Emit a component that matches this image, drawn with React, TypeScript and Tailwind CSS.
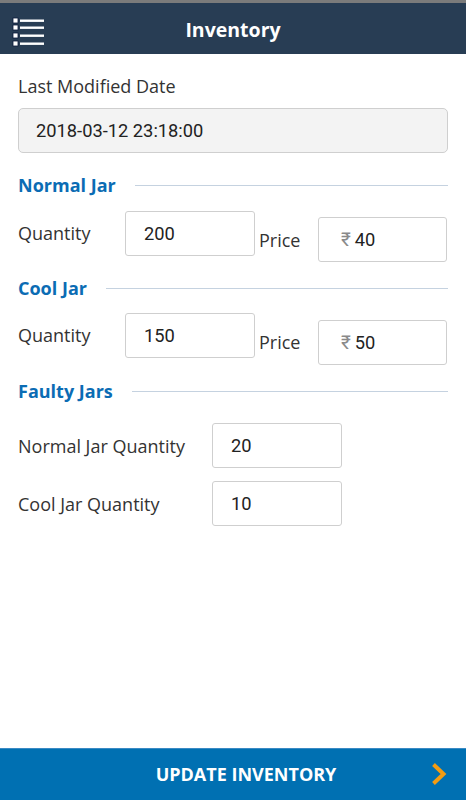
export default function App() {
  const font = { fontFamily: '"Open Sans", "Noto Sans", sans-serif' };
  return (
    <div className="flex min-h-[800px] w-full flex-col bg-white" style={font}>
      <div className="h-[3px] bg-[#7b7b7b]" />
      <header className="relative flex h-[51px] items-center justify-center bg-[#283d54]">
        <svg className="absolute left-[12px] top-[12px]" width="34" height="32" viewBox="0 0 34 32">
          {[3, 10, 18, 26].map((y) => (
            <g key={y}>
              <rect x="1" y={y} width="5" height="5" fill="#fff" stroke="#0b1b3a" strokeWidth="0.8" />
              <rect x="8" y={y + 1.5} width="24" height="2.4" fill="#fff" />
            </g>
          ))}
        </svg>
        <h1 className="mt-[2px] text-[19.5px] font-bold text-white">Inventory</h1>
      </header>

      <main className="flex flex-1 flex-col px-[18px] pt-[20px] text-[18px] leading-[24px] text-[#333]">
        <p>Last Modified Date</p>
        <div
          className="mt-[10px] flex h-[45px] items-center rounded-[5px] border border-[#cfcfcf] bg-[#f3f3f3] px-[17px] text-[18.3px] text-[#222]"
          style={{ fontFamily: 'Roboto, sans-serif' }}
        >
          2018-03-12 23:18:00
        </div>

        <SectionTitle label="Normal Jar" className="mt-[20px]" />
        <JarRow qty="200" price="40" />

        <SectionTitle label="Cool Jar" className="mt-[14px]" />
        <JarRow qty="150" price="50" offset />

        <SectionTitle label="Faulty Jars" className="mt-[14px]" />
        <div className="mt-[20px] flex items-center">
          <span className="w-[194px]">Normal Jar Quantity</span>
          <Box value="20" className="w-[130px]" />
        </div>
        <div className="mt-[13px] flex items-center">
          <span className="w-[194px]">Cool Jar Quantity</span>
          <Box value="10" className="w-[130px]" />
        </div>
      </main>

      <footer className="relative flex h-[52px] items-center justify-center border-t border-[#3a8ac4] bg-[#0070b2]">
        <span className="ml-[26px] text-[18px] font-bold text-white">UPDATE INVENTORY</span>
        <svg className="absolute right-[19px] top-[13px]" width="16" height="24" viewBox="0 0 16 24">
          <path d="M2.5 2.5 L12.5 12 L2.5 21.5" fill="none" stroke="#f39c12" strokeWidth="4" />
        </svg>
      </footer>
    </div>
  );
}

function SectionTitle({ label, className }: { label: string; className?: string }) {
  return (
    <div className={`flex items-center gap-[19px] ${className ?? ''}`}>
      <span className="text-[18px] font-bold leading-[24px] text-[#0b6cb4]">{label}</span>
      <div className="h-px flex-1 bg-[#c5d2e0]" />
    </div>
  );
}

function Box({ value, prefix, className }: { value: string; prefix?: boolean; className?: string }) {
  return (
    <div
      className={`flex h-[45px] items-center rounded-[3px] border border-[#cfcfcf] bg-white px-[18px] text-[18.3px] text-[#222] ${className ?? ''}`}
      style={{ fontFamily: 'Roboto, sans-serif' }}
    >
      {prefix && <span className="mr-[4px] text-[19px] text-[#8a8a8a]">₹</span>}
      {value}
    </div>
  );
}

function JarRow({ qty, price, offset }: { qty: string; price: string; offset?: boolean }) {
  return (
    <div className={`flex items-start ${offset ? 'mt-[13px]' : 'mt-[14px]'}`}>
      <span className="mt-[10px] w-[107px]">Quantity</span>
      <Box value={qty} className="w-[130px]" />
      <span className="ml-[4px] mt-[17px] w-[59px]">Price</span>
      <Box value={price} prefix className={`w-[129px] px-[22px] ${offset ? 'mt-[7px]' : 'mt-[6px]'}`} />
    </div>
  );
}
